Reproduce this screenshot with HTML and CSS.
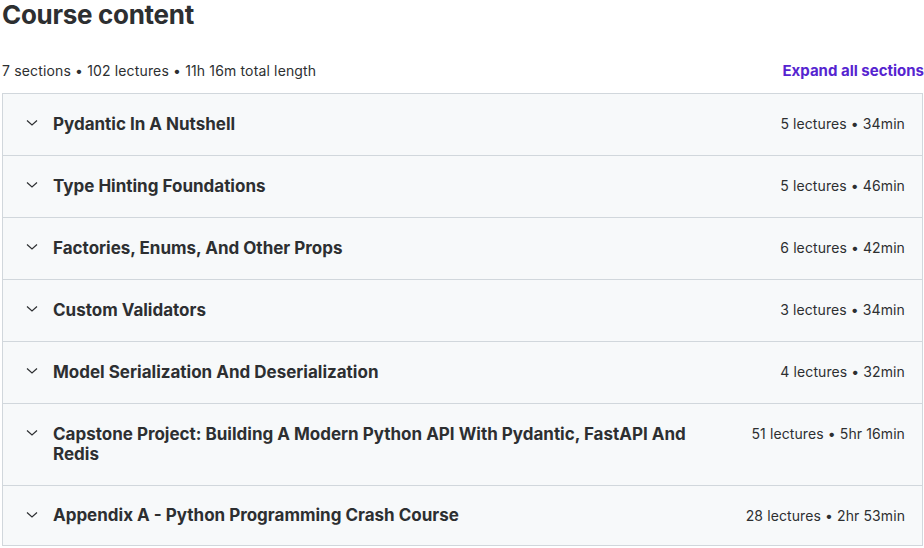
FILE: index.html
```html
<!DOCTYPE html>
<html lang="en">
<head>
<meta charset="utf-8">
<title>Course content</title>
<link rel="stylesheet" href="styles.css">
</head>
<body>
<main class="course">
  <h2 class="course-title">Course content</h2>
  <div class="meta-bar">
    <span class="meta">7 sections • 102 lectures • 11h 16m total length</span>
    <button class="expand">Expand all sections</button>
  </div>
  <div class="sections">
    <div class="section">
      <svg class="chev" viewBox="0 0 14 14"><path d="M2 5.5 L7 10 L12 5.5"/></svg>
      <span class="sec-title">Pydantic In A Nutshell</span>
      <span class="sec-info">5 lectures • 34min</span>
    </div>
    <div class="section">
      <svg class="chev" viewBox="0 0 14 14"><path d="M2 5.5 L7 10 L12 5.5"/></svg>
      <span class="sec-title">Type Hinting Foundations</span>
      <span class="sec-info">5 lectures • 46min</span>
    </div>
    <div class="section">
      <svg class="chev" viewBox="0 0 14 14"><path d="M2 5.5 L7 10 L12 5.5"/></svg>
      <span class="sec-title">Factories, Enums, And Other Props</span>
      <span class="sec-info">6 lectures • 42min</span>
    </div>
    <div class="section">
      <svg class="chev" viewBox="0 0 14 14"><path d="M2 5.5 L7 10 L12 5.5"/></svg>
      <span class="sec-title">Custom Validators</span>
      <span class="sec-info">3 lectures • 34min</span>
    </div>
    <div class="section">
      <svg class="chev" viewBox="0 0 14 14"><path d="M2 5.5 L7 10 L12 5.5"/></svg>
      <span class="sec-title">Model Serialization And Deserialization</span>
      <span class="sec-info">4 lectures • 32min</span>
    </div>
    <div class="section">
      <svg class="chev" viewBox="0 0 14 14"><path d="M2 5.5 L7 10 L12 5.5"/></svg>
      <span class="sec-title">Capstone Project: Building A Modern Python API With Pydantic, FastAPI And Redis</span>
      <span class="sec-info">51 lectures • 5hr 16min</span>
    </div>
    <div class="section">
      <svg class="chev" viewBox="0 0 14 14"><path d="M2 5.5 L7 10 L12 5.5"/></svg>
      <span class="sec-title">Appendix A - Python Programming Crash Course</span>
      <span class="sec-info">28 lectures • 2hr 53min</span>
    </div>
  </div>
</main>
</body>
</html>
```
FILE: styles.css
```css
html, body {
  margin: 0;
  padding: 0;
  background: #ffffff;
}
body {
  font-family: "Inter", "Liberation Sans", sans-serif;
  color: #2d2f31;
}
.course {
  padding-left: 2px;
  width: 921px;
}
.course-title {
  margin: 0;
  font-size: 26px;
  line-height: 30px;
  font-weight: 700;
  letter-spacing: -0.3px;
}
.meta-bar {
  display: flex;
  justify-content: space-between;
  align-items: center;
  margin-top: 30px;
  height: 20px;
  margin-bottom: 13px;
  margin-right: -1px;
}
.meta {
  font-size: 14px;
  letter-spacing: 0.15px;
}
.expand {
  border: 0;
  background: none;
  padding: 0;
  font: inherit;
  font-size: 15px;
  font-weight: 700;
  color: #5624d0;
  cursor: pointer;
}
.sections {
  border: 1px solid #d1d7dc;
  border-bottom: 0;
}
.section {
  display: flex;
  align-items: flex-start;
  background: #f7f9fa;
  border-bottom: 1px solid #d1d7dc;
  padding: 19px 17px 21px 22px;
}
.section:last-child {
  padding-bottom: 19px;
}
.chev {
  width: 14px;
  height: 14px;
  flex: none;
  margin-top: 2px;
  margin-right: 14px;
  fill: none;
  stroke: #2d2f31;
  stroke-width: 1.2;
}
.sec-title {
  flex: 1;
  font-size: 17px;
  line-height: 20px;
  padding-top: 0.5px;
  font-weight: 700;
  max-width: 645px;
}
.sec-info {
  margin-left: auto;
  font-size: 14px;
  line-height: 21px;
  letter-spacing: 0.1px;
  white-space: nowrap;
  padding-left: 20px;
}
```
